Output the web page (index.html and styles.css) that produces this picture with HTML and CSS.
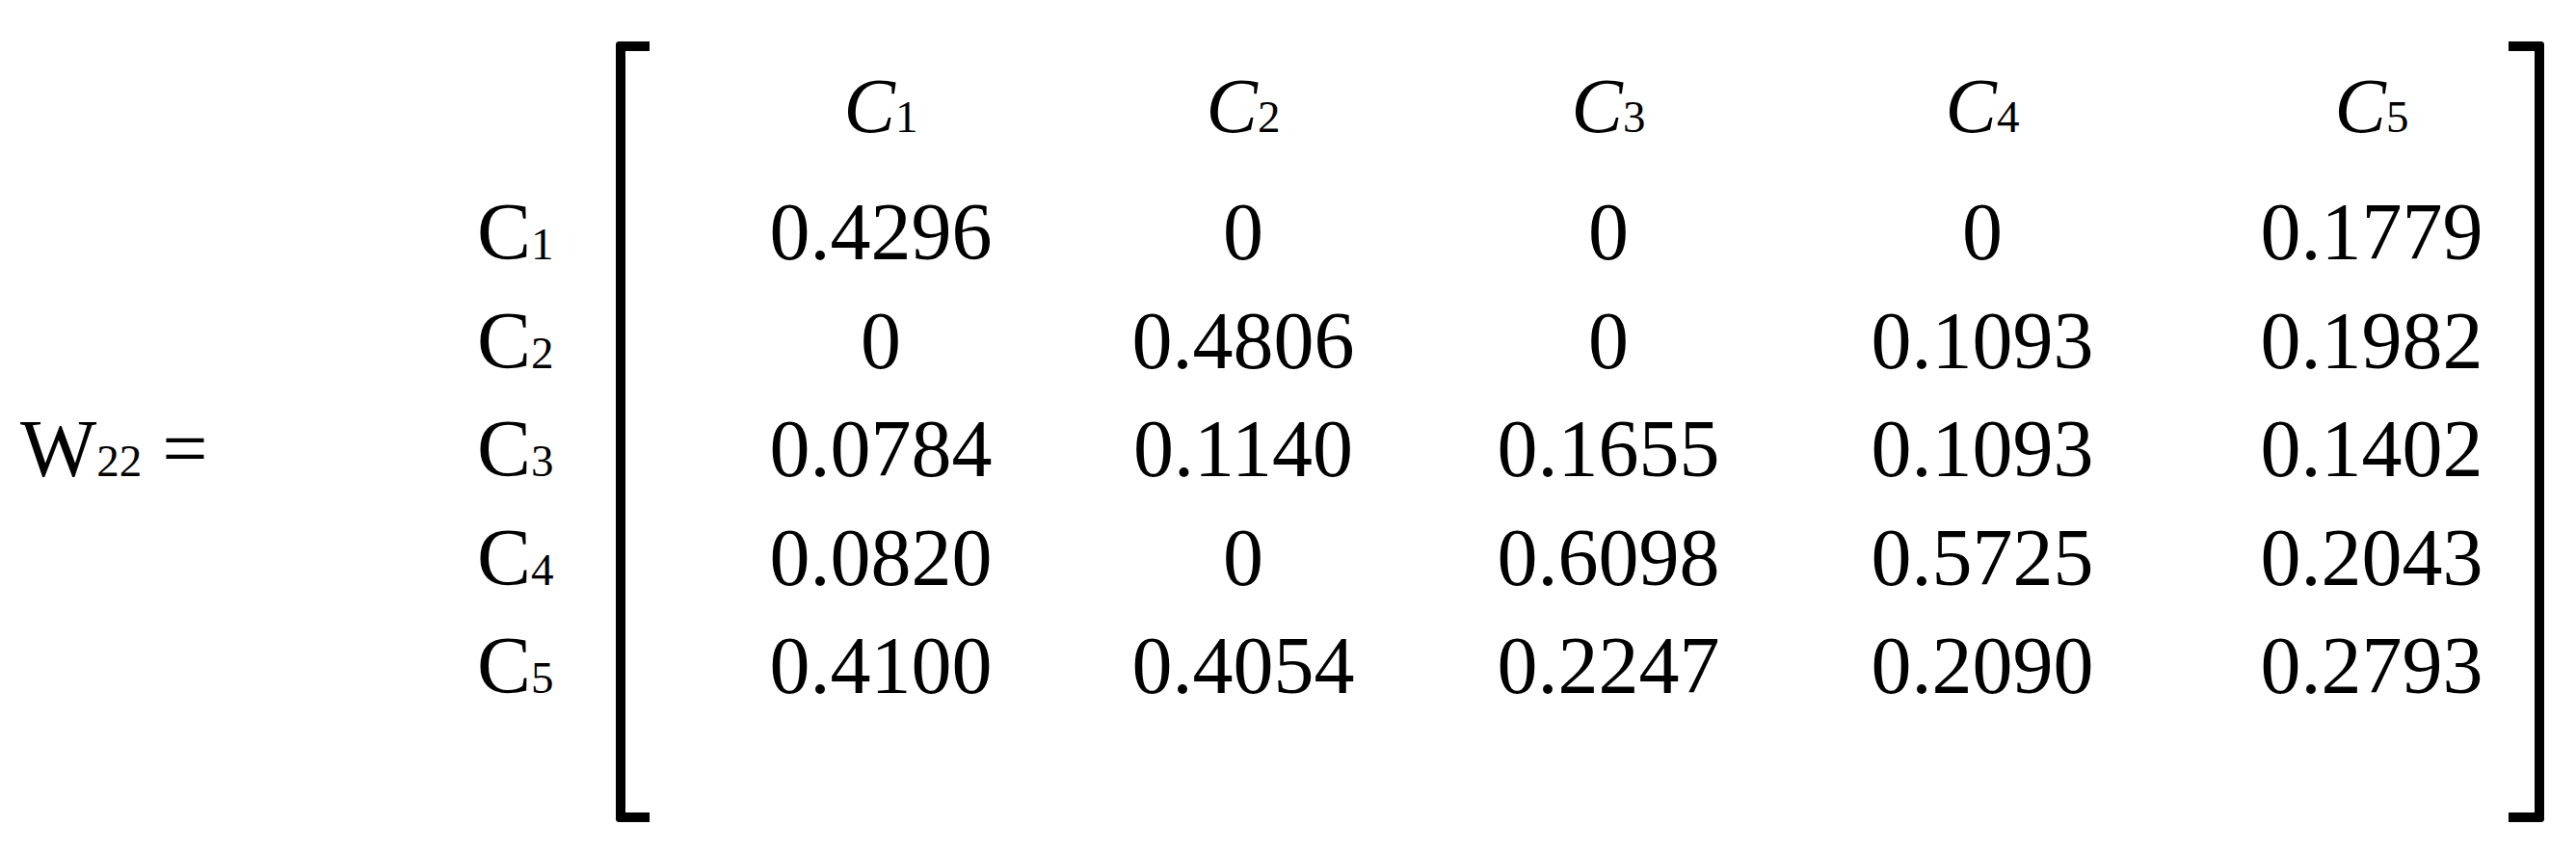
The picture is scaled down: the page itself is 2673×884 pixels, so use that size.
FILE: index.html
```
<!DOCTYPE html>
<html lang="en">
<head>
    <meta charset="UTF-8">
    <meta name="viewport" content="width=device-width, initial-scale=1.0">
    <title>Weighted Matrix W22</title>
    <link rel="stylesheet" href="styles.css">
</head>
<body>
    <div class="equation">
        <div class="lhs">W<sub>22</sub> =</div>

        <div class="labels">
            <div class="head-cell"></div>
            <div>C<sub>1</sub></div>
            <div>C<sub>2</sub></div>
            <div>C<sub>3</sub></div>
            <div>C<sub>4</sub></div>
            <div>C<sub>5</sub></div>
        </div>

        <div class="bracket bracket-left"></div>

        <div class="matrix">
            <div class="head-cell"><i>C</i><sub>1</sub></div>
            <div class="head-cell"><i>C</i><sub>2</sub></div>
            <div class="head-cell"><i>C</i><sub>3</sub></div>
            <div class="head-cell"><i>C</i><sub>4</sub></div>
            <div class="head-cell"><i>C</i><sub>5</sub></div>

            <div>0.4296</div>
            <div>0</div>
            <div>0</div>
            <div>0</div>
            <div>0.1779</div>

            <div>0</div>
            <div>0.4806</div>
            <div>0</div>
            <div>0.1093</div>
            <div>0.1982</div>

            <div>0.0784</div>
            <div>0.1140</div>
            <div>0.1655</div>
            <div>0.1093</div>
            <div>0.1402</div>

            <div>0.0820</div>
            <div>0</div>
            <div>0.6098</div>
            <div>0.5725</div>
            <div>0.2043</div>

            <div>0.4100</div>
            <div>0.4054</div>
            <div>0.2247</div>
            <div>0.2090</div>
            <div>0.2793</div>
        </div>

        <div class="bracket bracket-right"></div>
    </div>
</body>
</html>
```

FILE: styles.css
```
body {
    margin: 0;
    background-color: #fff;
    color: #000;
    font-family: "Liberation Serif", "Times New Roman", serif;
    font-size: 84px;
}

.equation {
    display: flex;
    align-items: flex-start;
    padding: 43px 0 0 21px;
}

.equation > div {
    flex-shrink: 0;
}

sub {
    font-size: 0.56em;
    vertical-align: baseline;
}

/* left hand side sits on the baseline of the third row */
.lhs {
    width: 474px;
    padding-top: 367px;
    line-height: 112.5px;
    white-space: nowrap;
}

.labels,
.matrix {
    display: grid;
    grid-template-rows: 132px repeat(5, 112.5px);
    padding-top: 10px;
    line-height: 112.5px;
}

.labels {
    width: 144px;
}

.matrix {
    grid-template-columns: 246px 266px 252px 284px 284px;
    column-gap: 120px;
    padding-left: 117px;
    text-align: center;
}

.head-cell i {
    font-size: 80px;
}

.bracket {
    box-sizing: border-box;
    height: 810px;
    border: 10px solid #000;
}

.bracket-left {
    width: 35px;
    border-right: none;
    border-radius: 4px 0 0 4px;
}

.bracket-right {
    width: 37px;
    border-left: none;
    border-radius: 0 4px 4px 0;
}
```
